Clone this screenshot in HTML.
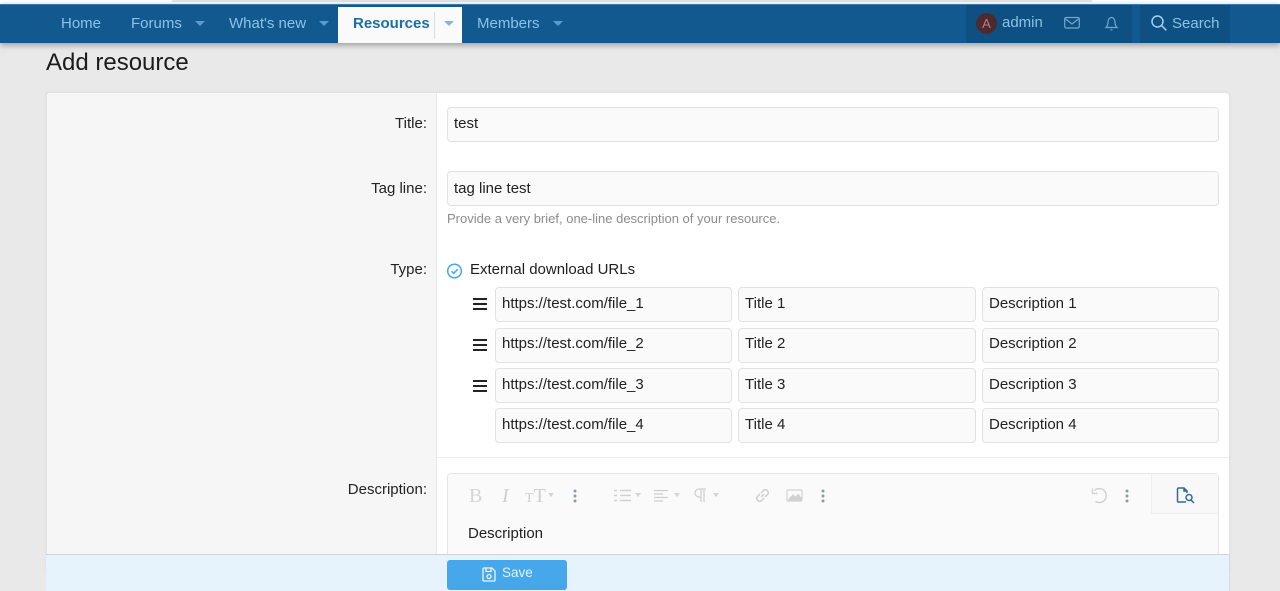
<!DOCTYPE html>
<html><head><meta charset="utf-8"><style>
*{box-sizing:border-box}
html,body{margin:0;padding:0}
body{width:1280px;height:591px;overflow:hidden;position:relative;background:#e9e9e9;font-family:"Liberation Sans",sans-serif;font-size:15px;color:#1e1e1e}
.a{position:absolute}
.t{position:absolute;white-space:nowrap;line-height:18px}
.nav{color:#8cc2e6;font-size:15px}
.ar{position:absolute;width:0;height:0;border-left:5px solid transparent;border-right:5px solid transparent;border-top:5px solid #5d9cc8}
.c{position:absolute;width:0;height:0;border-left:3.500px solid transparent;border-right:3.500px solid transparent;border-top:4px solid #d4d4d4}
.inp{position:absolute;background:#fafafa;border:1px solid #e2e2e2;border-radius:4px;height:35px;padding-left:6px;line-height:32px;font-size:15px;color:#222;white-space:nowrap}
.lb{position:absolute;right:853px;white-space:nowrap;line-height:18px;color:#222;font-size:15px}
.bars{position:absolute;width:14px;height:12px;border-top:2px solid #222;border-bottom:2px solid #222}
.bars:after{content:"";position:absolute;left:0;right:0;top:3px;height:2px;background:#222}
svg{position:absolute;overflow:visible}
</style></head><body>
<div class="a" style="left:0;top:0;width:1280px;height:4px;background:#fff"></div>
<div class="a" style="left:172px;top:0;width:920px;height:2px;background:#e4e4e4"></div>
<div class="a" style="left:0;top:4px;width:1280px;height:39px;background:#11598f;border-top:1px solid #3f7ba8;box-shadow:0 2px 6px rgba(0,0,0,.35)"></div>

<div class="t nav" style="left:61px;top:15px">Home</div>
<div class="t nav" style="left:131px;top:15px">Forums</div>
<div class="ar" style="left:195px;top:21px"></div>
<div class="t nav" style="left:229px;top:15px">What's new</div>
<div class="ar" style="left:319px;top:21px"></div>
<div class="a" style="left:338px;top:7px;width:124px;height:36px;background:#fafafa"></div>
<div class="t" style="left:353px;top:15px;font-weight:bold;color:#1a6fa8;font-size:15px">Resources</div>
<div class="a" style="left:434px;top:12px;width:1px;height:27px;background:#ddd"></div>
<div class="ar" style="left:444px;top:21px;border-top-color:#82b7dc"></div>
<div class="t nav" style="left:477px;top:15px">Members</div>
<div class="ar" style="left:553px;top:21px"></div>

<div class="a" style="left:966px;top:5px;width:166px;height:38px;background:#0f5082"></div>
<div class="a" style="left:1140px;top:5px;width:90px;height:38px;background:#0f5082"></div>
<div class="a" style="left:976px;top:13px;width:21px;height:21px;border-radius:50%;background:#4d2a2e;color:#b77d7d;font-size:13px;line-height:21px;text-align:center">A</div>
<div class="t nav" style="left:1002px;top:14px;font-size:15px">admin</div>
<svg style="left:1064px;top:16px" width="16" height="14" fill="none" stroke="#6ea9d3" stroke-width="1.200"><rect x=".7" y="1.500" width="14.600" height="10.500" rx="1.500"/><path d="M1.500 3L8 8 14.500 3"/></svg>
<svg style="left:1104px;top:15px" width="15" height="16" fill="none" stroke="#6ea9d3" stroke-width="1.200"><path d="M2 12.500h11c-1.500-1.500-2-3-2-5.500 0-2.500-1.500-4.500-3.500-4.500S4 4.500 4 7c0 2.500-.5 4-2 5.500z"/><path d="M6.500 14.800h2"/></svg>
<svg style="left:1151px;top:15px" width="17" height="17" fill="none" stroke="#a5d0ee" stroke-width="1.500"><circle cx="6.500" cy="6.500" r="5.500"/><path d="M10.500 10.500l4.800 4.800"/></svg>
<div class="t nav" style="left:1172px;top:15px">Search</div>

<div class="t" style="left:46px;top:48px;font-size:24px;line-height:30px;color:#1c1c1c">Add resource</div>

<div class="a" style="left:46px;top:92px;width:1184px;height:480px;background:#fff;border:1px solid #e2e2e2;border-radius:4px 4px 0 0;box-shadow:0 0 2px rgba(0,0,0,.05)"></div>
<div class="a" style="left:47px;top:93px;width:390px;height:470px;background:#f6f6f6;border-right:1px solid #e8e8e8;border-top-left-radius:4px"></div>

<div class="lb" style="top:115px">Title:</div>
<div class="inp" style="left:447px;top:107px;width:772px">test</div>
<div class="lb" style="top:180px">Tag line:</div>
<div class="inp" style="left:447px;top:171px;width:772px;line-height:34px">tag line test</div>
<div class="t" style="left:447px;top:210px;font-size:13px;color:#8c8c8c">Provide a very brief, one-line description of your resource.</div>

<div class="lb" style="top:261px">Type:</div>
<svg style="left:446px;top:262px" width="16" height="16" fill="none" stroke="#47a7eb" stroke-width="1.500"><circle cx="8.500" cy="9" r="6.800"/><path d="M5.500 9.200l2.200 2.200 4-4.200"/></svg>
<div class="t" style="left:470px;top:261px">External download URLs</div>

<div class="bars" style="left:473px;top:298px"></div>
<div class="inp" style="left:495px;top:287px;width:237px">https://test.com/file_1</div>
<div class="inp" style="left:738px;top:287px;width:238px">Title 1</div>
<div class="inp" style="left:982px;top:287px;width:237px">Description 1</div>

<div class="bars" style="left:473px;top:339px"></div>
<div class="inp" style="left:495px;top:328px;width:237px;line-height:30px">https://test.com/file_2</div>
<div class="inp" style="left:738px;top:328px;width:238px;line-height:30px">Title 2</div>
<div class="inp" style="left:982px;top:328px;width:237px;line-height:30px">Description 2</div>

<div class="bars" style="left:473px;top:380px"></div>
<div class="inp" style="left:495px;top:368px;width:237px">https://test.com/file_3</div>
<div class="inp" style="left:738px;top:368px;width:238px">Title 3</div>
<div class="inp" style="left:982px;top:368px;width:237px">Description 3</div>

<div class="inp" style="left:495px;top:408px;width:237px">https://test.com/file_4</div>
<div class="inp" style="left:738px;top:408px;width:238px">Title 4</div>
<div class="inp" style="left:982px;top:408px;width:237px">Description 4</div>

<div class="a" style="left:437px;top:457px;width:792px;height:1px;background:#ececec"></div>

<div class="lb" style="top:481px">Description:</div>
<div class="a" style="left:447px;top:473px;width:772px;height:100px;background:#fafafa;border:1px solid #e6e6e6;border-radius:4px 4px 0 0"></div>
<div class="a" style="left:1151px;top:474px;width:67px;height:40px;background:#f8f8f8;border-left:1px solid #eee;border-bottom:1px solid #eee"></div>

<div class="t" style="left:469px;top:487px;font-family:'Liberation Serif',serif;font-size:20px;color:#d6d6d6">B</div>
<div class="t" style="left:502px;top:487px;font-family:'Liberation Serif',serif;font-size:20px;font-style:italic;color:#d0d0d0">I</div>
<div class="t" style="left:525px;top:487px;font-family:'Liberation Serif',serif;font-size:20px;color:#d0d0d0"><span style="font-size:14px">T</span>T</div>
<div class="c" style="left:548px;top:493px"></div>
<svg style="left:573px;top:489px" width="4" height="14" fill="#8a9aa8"><circle cx="2" cy="2" r="1.500"/><circle cx="2" cy="7" r="1.500"/><circle cx="2" cy="12" r="1.500"/></svg>

<svg style="left:614px;top:489px" width="18" height="13" fill="none" stroke="#d0d0d0" stroke-width="1.200"><path d="M6 1.500h11M6 6.500h11M6 11.500h11M0 1.500h3M0 6.500h3M0 11.500h3" stroke-width="1.500"/></svg>
<div class="c" style="left:635px;top:493px"></div>
<svg style="left:654px;top:489px" width="16" height="14" fill="none" stroke="#cfcfcf" stroke-width="1.200"><path d="M0 1.500h14M0 5h9M0 8.500h14M0 12h9"/></svg>
<div class="c" style="left:674px;top:493px"></div>
<svg style="left:694px;top:488px" width="13" height="15" fill="none" stroke="#d0d0d0" stroke-width="1.300"><path d="M12 1H5a4 4 0 0 0 0 8h2M7 1v13M10 1v13"/></svg>
<div class="c" style="left:713px;top:493px"></div>
<svg style="left:754px;top:487px" width="17" height="17" fill="none" stroke="#d2d2d2" stroke-width="1.600"><path d="M7 10l3-3M6 7L3 10a3 3 0 0 0 4 4l3-3M11 10l3-3a3 3 0 0 0-4-4L7 6"/></svg>
<svg style="left:786px;top:489px" width="17" height="13" fill="none" stroke="#d2d2d2" stroke-width="1.200"><rect x="1" y="1" width="15" height="11" rx="1"/><path d="M3 10l4-4 2.500 2.500L12 5.500l3 3.500v2H3z" fill="#d2d2d2"/></svg>
<svg style="left:821px;top:489px" width="4" height="14" fill="#8a9aa8"><circle cx="2" cy="2" r="1.500"/><circle cx="2" cy="7" r="1.500"/><circle cx="2" cy="12" r="1.500"/></svg>

<svg style="left:1091px;top:487px" width="17" height="17" fill="none" stroke="#d2d2d2" stroke-width="1.500"><path d="M3.500 3.500a7 7 0 1 1 1 11"/><path d="M1.500 1.500v5h5"/></svg>
<svg style="left:1125px;top:489px" width="4" height="14" fill="#8a9aa8"><circle cx="2" cy="2" r="1.500"/><circle cx="2" cy="7" r="1.500"/><circle cx="2" cy="12" r="1.500"/></svg>
<svg style="left:1176px;top:487px" width="19" height="17" fill="none" stroke="#2f6c9c" stroke-width="1.500"><path d="M10 15H2.500a1 1 0 0 1-1-1V2a1 1 0 0 1 1-1H8l3 3v2"/><path d="M8 1v3h3" fill="#2f6c9c"/><circle cx="13" cy="10.500" r="3"/><path d="M15 13l3 3"/></svg>

<div class="t" style="left:468px;top:525px;font-size:15px;color:#222">Description</div>

<div class="a" style="left:46px;top:554px;width:1184px;height:37px;background:#e7f3fc;border-top:1px solid #d2d2d2;border-right:1px solid #d8d8d8"></div>
<div class="a" style="left:447px;top:560px;width:120px;height:30px;background:#47a7eb;border-radius:3px"></div>
<svg style="left:482px;top:567px" width="14" height="15" fill="none" stroke="#eaf5fd" stroke-width="1.300"><path d="M1 2a1 1 0 0 1 1-1h8l3 3v9a1 1 0 0 1-1 1H2a1 1 0 0 1-1-1z"/><path d="M4 1v3.500h5V1"/><circle cx="7" cy="9.500" r="2"/></svg>
<div class="t" style="left:502px;top:564px;font-size:13.500px;color:#e3f1fb">Save</div>
</body></html>
